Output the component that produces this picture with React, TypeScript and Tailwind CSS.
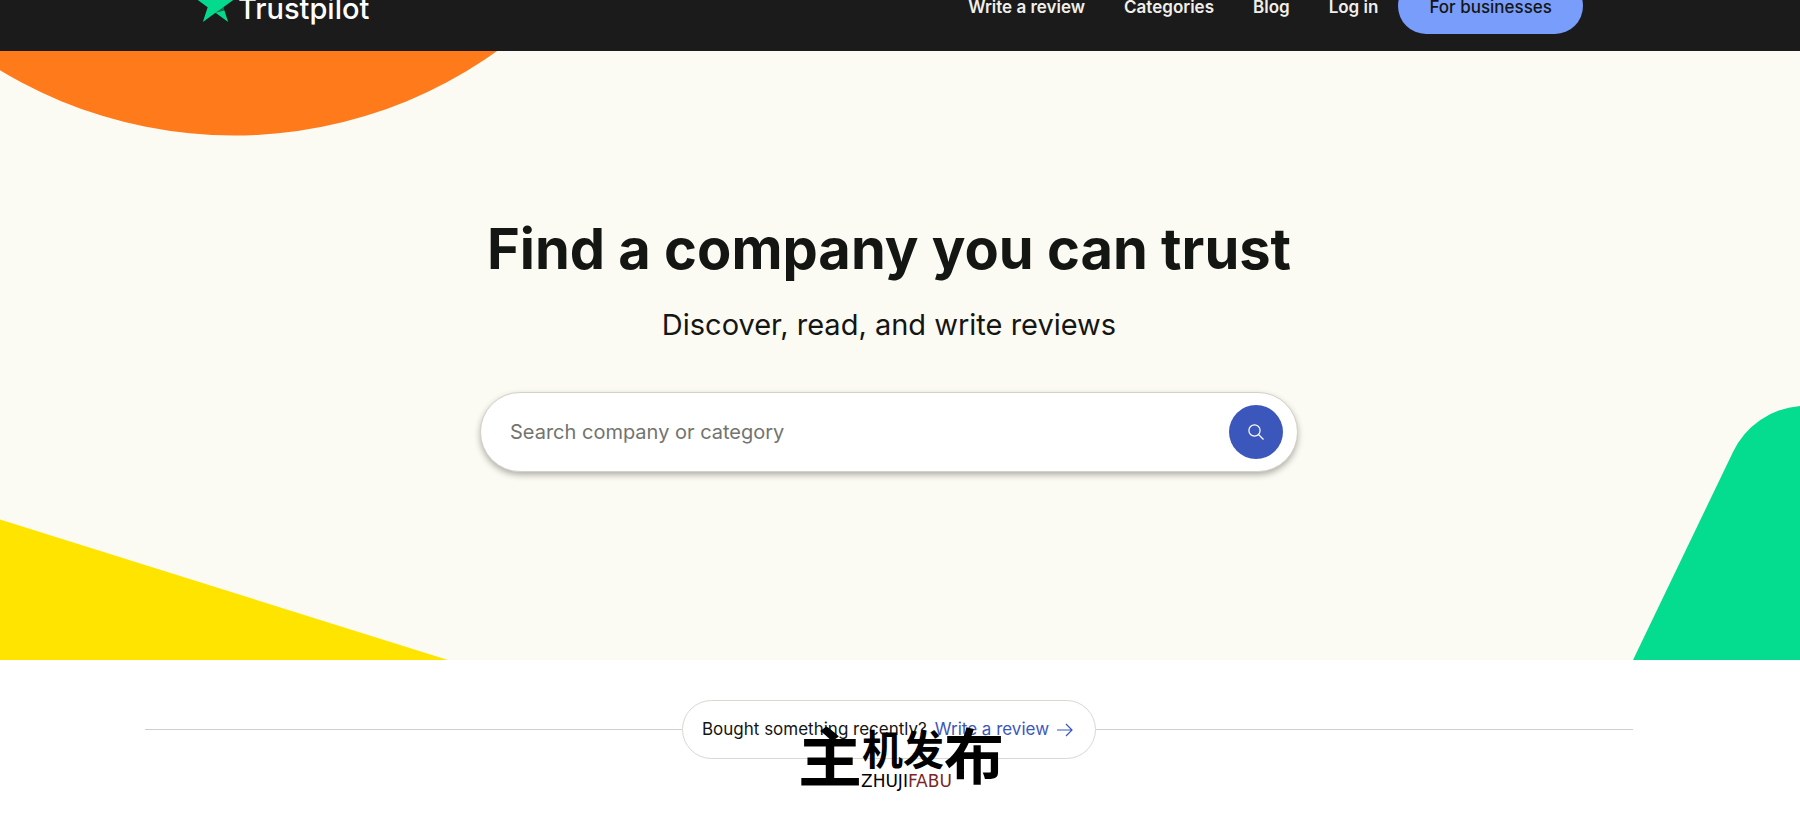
import React from "react";

const navLinks = ["Write a review", "Categories", "Blog", "Log in"];

function Logo() {
  return (
    <a href="#" aria-label="Trustpilot home" className="flex h-12 items-end gap-0.5 pb-2">
      <svg viewBox="0 0 30.15 28.7" className="h-[39px] w-[41px]" aria-hidden="true">
        <path
          fill="#04da8d"
          d="M30.14 11.07H18.63L15.08.18l-3.57 10.89L0 11.06l9.32 6.74-3.57 10.88 9.32-6.73 9.31 6.73-3.55-10.88z"
        />
        <path fill="#0b6b47" d="M21.63 20.26l-.8-2.46-5.75 4.15z" />
      </svg>
      <span className="text-[29px] leading-[26px] font-medium text-white">Trustpilot</span>
    </a>
  );
}

function Header() {
  return (
    <header className="flex h-[51px] items-end overflow-hidden bg-[#1b1b1b]">
      <div className="flex h-[90px] flex-1 items-center justify-between pr-[217px] pl-[195px]">
        <Logo />
        <nav className="flex items-center text-[17px] leading-6 font-semibold text-[#f0efea]">
          <ul className="flex gap-[39px] pt-0.5 pr-5">
            {navLinks.map((label) => (
              <li key={label}>
                <a href="#">{label}</a>
              </li>
            ))}
          </ul>
          <a
            href="#"
            className="flex h-14 items-center rounded-full bg-[#799dfb] px-[31px] pt-0.5 font-medium text-[#141613]"
          >
            For businesses
          </a>
        </nav>
      </div>
    </header>
  );
}

function HeroShapes() {
  return (
    <div aria-hidden="true">
      <svg viewBox="0 0 500 85" className="absolute top-0 left-0 h-[85px] w-[500px]">
        <circle cx="234" cy="-367" r="451.5" fill="#ff7a1a" />
      </svg>
      <svg viewBox="0 0 448 141" className="absolute bottom-0 left-0 h-[141px] w-[448px]">
        <path d="M0 .5L448 141H0z" fill="#ffe400" />
      </svg>
      <svg viewBox="0 0 167 254" className="absolute right-0 bottom-0 h-[254px] w-[167px]">
        <path d="M0 254L100 46A81 81 0 0 1 167 0V254z" fill="#04dc8f" />
      </svg>
    </div>
  );
}

function Hero() {
  return (
    <section className="relative overflow-hidden bg-[#fcfbf3] pt-[162px] pr-[22px] pb-[188px]">
      <HeroShapes />
      <div className="relative mx-auto flex max-w-[818px] flex-col items-center">
        <h1 className="text-[56px] leading-[72px] font-bold whitespace-nowrap">
          Find a company you can trust
        </h1>
        <p className="mt-5 text-[29px] leading-10">Discover, read, and write reviews</p>
        <form
          role="search"
          onSubmit={(e) => e.preventDefault()}
          className="mt-[47px] flex h-20 w-full items-center rounded-full border border-[#d6d0c9] bg-white pr-3.5 pl-[29px] shadow-[0_3px_6px_rgba(0,0,0,0.3)]"
        >
          <input
            type="search"
            aria-label="Search company or category"
            placeholder="Search company or category"
            className="min-w-0 flex-1 bg-transparent text-xl outline-none placeholder:text-[#73736f]"
          />
          <button
            type="submit"
            aria-label="Search"
            className="flex size-[54px] items-center justify-center rounded-full bg-[#3c57bc] text-white"
          >
            <svg viewBox="0 0 16 16" className="size-4" fill="none" stroke="currentColor" strokeWidth="1.2">
              <circle cx="6.5" cy="6.5" r="5.6" />
              <path d="M10.5 10.5L15.5 15.5" />
            </svg>
          </button>
        </form>
      </div>
    </section>
  );
}

function Watermark() {
  return (
    <div className="pointer-events-none absolute top-[57px] left-[798px] font-['Noto_Sans_CJK_SC',sans-serif] font-bold text-black">
      <div className="flex items-start whitespace-nowrap">
        <span className="text-[64px] leading-[72px]">主</span>
        <span className="text-[41px] leading-[60px]">机发</span>
        <span className="text-[60px] leading-[72px]">布</span>
      </div>
      <span className="absolute top-[54px] left-[63px] font-['DejaVu_Sans',sans-serif] text-[17px] leading-5 font-normal">
        ZHUJI<span className="text-[#7a2626]">FABU</span>
      </span>
    </div>
  );
}

function ReviewPrompt() {
  return (
    <section className="relative bg-white pt-10 pr-[167px] pb-14 pl-[145px]">
      <div className="flex items-center">
        <div className="h-px flex-1 bg-[#d0ceca]" />
        <p className="flex h-[59px] items-center gap-2 rounded-full border border-[#dcd6d0] pr-[22px] pl-[19px] text-[17px]">
          <span>Bought something recently?</span>
          <a href="#" className="flex items-center gap-2 text-[#3c57bc]">
            Write a review
            <svg viewBox="0 0 16 14" className="h-3.5 w-4" fill="none" stroke="currentColor" strokeWidth="1.2">
              <path d="M0 7H15M9 1L15 7L9 13" />
            </svg>
          </a>
        </p>
        <div className="h-px flex-1 bg-[#d0ceca]" />
      </div>
      <Watermark />
    </section>
  );
}

export default function App() {
  return (
    <main className="min-h-screen bg-white font-['Inter',sans-serif] text-[#141613]">
      <Header />
      <Hero />
      <ReviewPrompt />
    </main>
  );
}
